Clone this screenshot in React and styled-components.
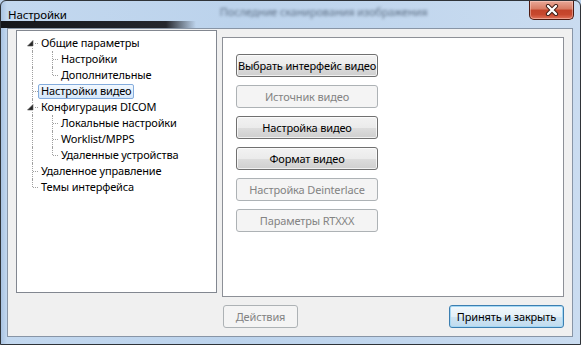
import React from "react"
import styled, { createGlobalStyle, css } from "styled-components"

const GlobalStyle = createGlobalStyle`
    html, body {
        margin: 0;
        padding: 0;
        background: #b9d0ea;
    }
    body {
        font-family: "Noto Sans", "Open Sans", sans-serif;
        font-size: 11px;
        letter-spacing: -0.15px;
        color: #000;
    }
`

const Window = styled.div`
    width: 581px;
    height: 345px;
    box-sizing: border-box;
    border: 1px solid #2f3338;
    border-radius: 6px 6px 0 0;
    display: flex;
    flex-direction: column;
    background:
        linear-gradient(to right, rgba(12, 12, 14, 0.95) 0, rgba(20, 20, 24, 0.9) 165px, rgba(40, 40, 50, 0) 195px) 0 20px / 100% 7px no-repeat,
        linear-gradient(to right, #a9c3e2 0, #c3d8ef 6px, #bcd3ec 40%, #c2d7ee 70%, #cadcf0 100%);
    overflow: hidden;
`

const TitleBar = styled.div`
    height: 27px;
    display: flex;
    align-items: flex-start;
    padding: 0 6px 0 7px;
`

const Title = styled.span`
    margin-top: 7px;
    font-size: 11.5px;
    line-height: 14px;
`

const GhostTitle = styled.span`
    margin: 3px 0 0 153px;
    font-size: 11px;
    color: #5f7187;
    filter: blur(1.4px);
    flex: 1;
`

const CloseButton = styled.div`
    width: 45px;
    height: 19px;
    box-sizing: border-box;
    border: 1px solid #4e1a10;
    border-top: none;
    border-radius: 0 0 5px 5px;
    background: linear-gradient(to bottom, #e9a897 0%, #d77a62 45%, #c2432a 50%, #c7482e 75%, #e0725a 100%);
    box-shadow: inset 0 0 0 1px rgba(255, 220, 210, 0.45);
    display: flex;
    align-items: center;
    justify-content: center;
`

const Client = styled.div`
    flex: 1;
    margin: 0 7px 7px 6px;
    border: 1px solid #8895a6;
    background: #f0f0f0;
    padding: 1px 8px 8px 8px;
    display: flex;
    flex-direction: column;
`

const MainRow = styled.div`
    display: flex;
    align-items: flex-start;
    gap: 5px;
`

const TreeBox = styled.div`
    width: 201px;
    height: 263px;
    box-sizing: border-box;
    border: 1px solid #828790;
    background: #fff;
    padding: 4px 0 0 1px;
`

const TreeRow = styled.div`
    height: 16px;
    display: flex;
    align-items: center;
`

const Guide = styled.div`
    position: relative;
    width: 20px;
    height: 16px;
    flex: none;
    &::before {
        content: "";
        position: absolute;
        left: 14px;
        border-left: 1px dotted #a0a0a0;
        ${p => p.$vert === "full" && css`top: 0; bottom: 0;`}
        ${p => p.$vert === "top" && css`top: 0; height: 8px;`}
        ${p => p.$vert === "bottom" && css`top: 8px; bottom: 0;`}
        ${p => p.$vert === "none" && css`display: none;`}
    }
    &::after {
        content: "";
        position: absolute;
        top: 8px;
        left: 15px;
        width: 5px;
        border-top: 1px dotted #a0a0a0;
        display: ${p => (p.$horiz ? "block" : "none")};
    }
`

const Expander = styled.svg`
    position: absolute;
    left: 9px;
    top: 5px;
    z-index: 1;
    background: #fff;
`

const Label = styled.span`
    height: 15px;
    box-sizing: border-box;
    padding: 0 2px;
    border: 1px solid ${p => (p.$selected ? "#84acdd" : "transparent")};
    border-radius: 2px;
    background: ${p => (p.$selected ? "linear-gradient(to bottom, #f2f8fe, #d5e7fb)" : "transparent")};
    line-height: 12px;
    white-space: nowrap;
`

const Panel = styled.div`
    flex: 1;
    margin-top: 7px;
    height: 260px;
    box-sizing: border-box;
    border: 1px solid #8d9097;
    background: #fff;
    padding: 16px 0 0 13px;
    display: flex;
    flex-direction: column;
    gap: 8px;
`

const Button = styled.div`
    width: ${p => p.$width}px;
    height: 23px;
    box-sizing: border-box;
    border: 1px solid ${p => (p.$disabled ? "#adb2b5" : p.$focused ? "#3c7fb1" : "#707070")};
    border-radius: 3px;
    background: ${p =>
        p.$disabled
            ? "#f4f4f4"
            : p.$focused
            ? "linear-gradient(to bottom, #f2f8fc 0%, #e3f0f8 50%, #cfe5f3 51%, #c0dbee 100%)"
            : "linear-gradient(to bottom, #f2f2f2 0%, #ebebeb 50%, #dddddd 51%, #cfcfcf 100%)"};
    box-shadow: ${p =>
        p.$disabled
            ? "none"
            : p.$focused
            ? "inset 0 0 0 1px #a6d8f4"
            : "inset 0 0 0 1px rgba(255, 255, 255, 0.7)"};
    color: ${p => (p.$disabled ? "#838383" : "#000")};
    display: flex;
    align-items: center;
    justify-content: center;
    white-space: nowrap;
    flex: none;
`

const Footer = styled.div`
    margin-top: 8px;
    padding-left: 207px;
    display: flex;
    justify-content: space-between;
`

const treeRows = [
    { label: "Общие параметры", guides: [{ vert: "bottom", horiz: true, expanded: true }] },
    { label: "Настройки", guides: [{ vert: "full" }, { vert: "full", horiz: true }] },
    { label: "Дополнительные", guides: [{ vert: "full" }, { vert: "top", horiz: true }] },
    { label: "Настройки видео", selected: true, guides: [{ vert: "full", horiz: true }] },
    { label: "Конфигурация DICOM", guides: [{ vert: "full", horiz: true, expanded: true }] },
    { label: "Локальные настройки", guides: [{ vert: "full" }, { vert: "full", horiz: true }] },
    { label: "Worklist/MPPS", guides: [{ vert: "full" }, { vert: "full", horiz: true }] },
    { label: "Удаленные устройства", guides: [{ vert: "full" }, { vert: "top", horiz: true }] },
    { label: "Удаленное управление", guides: [{ vert: "full", horiz: true }] },
    { label: "Темы интерфейса", guides: [{ vert: "top", horiz: true }] },
]

const videoButtons = [
    { label: "Выбрать интерфейс видео" },
    { label: "Источник видео", disabled: true },
    { label: "Настройка видео" },
    { label: "Формат видео" },
    { label: "Настройка Deinterlace", disabled: true },
    { label: "Параметры RTXXX", disabled: true },
]

const ExpandedGlyph = () => (
    <Expander width="7" height="7" viewBox="0 0 7 7">
        <polygon points="6,0.5 6,6 0.5,6" fill="#262626" stroke="#595959" strokeWidth="0.6" />
    </Expander>
)

const CloseGlyph = () => (
    <svg width="14" height="12" viewBox="0 0 14 12">
        <path d="M3 2 L11 10 M11 2 L3 10" stroke="#3b1a14" strokeWidth="4.2" strokeLinecap="round" />
        <path d="M3 2 L11 10 M11 2 L3 10" stroke="#fff" strokeWidth="2.4" strokeLinecap="round" />
    </svg>
)

const App = () => (
    <>
        <GlobalStyle />
        <Window>
            <TitleBar>
                <Title>Настройки</Title>
                <GhostTitle>Последние сканирования изображения</GhostTitle>
                <CloseButton>
                    <CloseGlyph />
                </CloseButton>
            </TitleBar>
            <Client>
                <MainRow>
                    <TreeBox>
                        {treeRows.map(row => (
                            <TreeRow key={row.label}>
                                {row.guides.map((g, i) => (
                                    <Guide key={i} $vert={g.vert} $horiz={g.horiz}>
                                        {g.expanded && <ExpandedGlyph />}
                                    </Guide>
                                ))}
                                <Label $selected={row.selected}>{row.label}</Label>
                            </TreeRow>
                        ))}
                    </TreeBox>
                    <Panel>
                        {videoButtons.map(b => (
                            <Button key={b.label} $width={142} $disabled={b.disabled}>
                                {b.label}
                            </Button>
                        ))}
                    </Panel>
                </MainRow>
                <Footer>
                    <Button $width={75} $disabled>Действия</Button>
                    <Button $width={115} $focused>Принять и закрыть</Button>
                </Footer>
            </Client>
        </Window>
    </>
)

export default App
